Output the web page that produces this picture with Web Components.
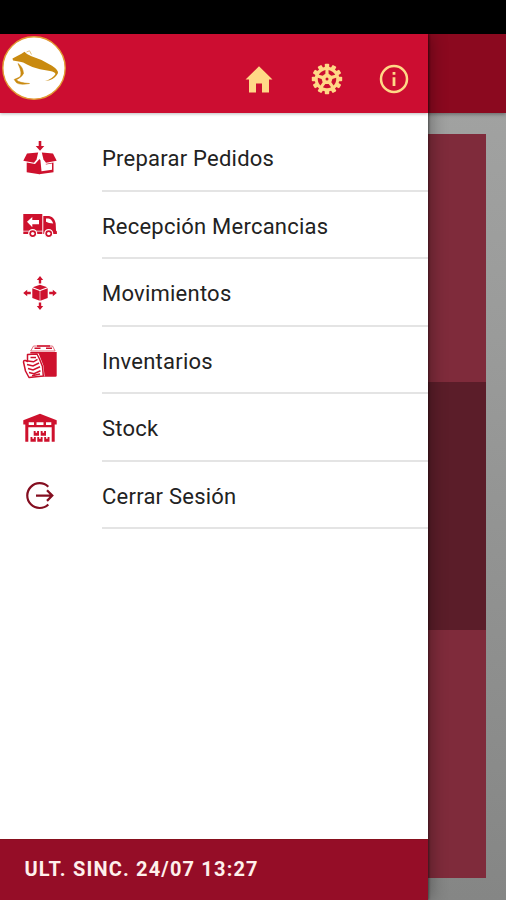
<!DOCTYPE html>
<html lang="es">
<head>
<meta charset="utf-8">
<title>Menú</title>
<style>
html,body{margin:0;height:100%;background:#000;overflow:hidden}
body{font-family:Roboto,"Liberation Sans",sans-serif}
</style>
</head>
<body>
<app-shell>
  <dashboard-page slot="page"></dashboard-page>
  <nav-drawer slot="drawer">
    <drawer-header slot="header"></drawer-header>
    <menu-item icon="box">Preparar Pedidos</menu-item>
    <menu-item icon="truck">Recepción Mercancias</menu-item>
    <menu-item icon="move">Movimientos</menu-item>
    <menu-item icon="inventory">Inventarios</menu-item>
    <menu-item icon="stock">Stock</menu-item>
    <menu-item icon="logout">Cerrar Sesión</menu-item>
    <sync-footer slot="footer">ULT. SINC. 24/07 13:27</sync-footer>
  </nav-drawer>
</app-shell>
<script>
const define = (name, html) => customElements.define(name, class extends HTMLElement {
  constructor() {
    super();
    this.attachShadow({mode: 'open'}).innerHTML = html;
  }
});

const icons = {
  box: `<g fill="#ce112d"><path d="M18.700 3h2.600v5h3L20 12.700 15.700 8h3z"/>
    <path d="M7 15.500 18.200 14.500 16.500 21.500 14 24.700 3.300 22.700z"/><path d="M33 15.500 21.800 14.500 23.500 21.500 26 24.700 36.700 22.700z"/>
    <path d="M6.700 24.500 15 26 19.500 21v15.300L6.700 34.300z"/>
    <path d="M19 21.500 20 21.500 25.300 26 33.500 24.500v9.800L19 36.300z"/></g>
    <path d="M20 17.500 26 26.400 32 25.500v6.300L21.500 33.300z" fill="#fff"/>`,
  truck: `<path fill="#ce112d" d="M3.300 8h19v16.700h-19zM3.300 25.500h19V28h-19zM23.300 10h5.800c4 .8 6 4 6.600 7.500l.3 7 .9 1v2.500H23.300z"/>
    <path fill="#fff" d="M7 15.800 12.300 11v3H19v4.200h-6.700v3zM26 12.500h2.400c2.600.5 4 2.300 4.800 5L29 17l-3-1.200z"/>
    <g fill="#ce112d" stroke="#fff" stroke-width="1.200"><circle cx="12.700" cy="27.600" r="4"/><circle cx="28.700" cy="27.600" r="4"/></g>
    <g fill="#fff"><circle cx="12.700" cy="27.600" r="1.700"/><circle cx="28.700" cy="27.600" r="1.700"/></g>`,
  move: `<g fill="#ce112d"><path d="M20 3l3.200 4h-2v3.500h-2.400V7h-2z"/>
    <path d="M20 37l3.200-4h-2v-3.500h-2.400V33h-2z"/><path d="M3.200 20l4-3.200v2h3.600v2.400H7.200v2z"/><path d="M36.800 20l-4-3.200v2h-3.600v2.400h3.600v2z"/>
    <path d="M12.800 14.300 20 11.800l7.200 2.500L20 17z"/><path d="M12.300 15.300l7.400 2.600V27.800l-7.400-2.900z"/><path d="M27.700 15.300l-7.400 2.600V27.800l7.400-2.900z"/></g>`,
  inventory: `<path d="M10.300 11h26.400v23.500q0 1.200-1.200 1.200H10.300z" fill="#ce112d"/>
    <path d="M10.700 10 13.500 5h19l2.600 5z" fill="#fff" stroke="#e2707e" stroke-width="1"/>
    <path d="M14.500 7.300h6M26 7.300h6M17 5h13" stroke="#ce112d" stroke-width="1.500"/>
    <path d="M9 13.500H18L22.500 25 23.500 34.500 9 36.500 5.500 31 3.500 20.500z" fill="#fff" stroke="#fff" stroke-width="2"/>
    <path d="M7.500 18v-4.500l9.500-.5 2.500 5 3 7.500.8 9.500L9 36.500 5.500 30 3.500 21q.2-2 2-1.500l2 1z" fill="#fff" stroke="#ce112d" stroke-width="1.500" stroke-linejoin="round"/>
    <path d="M10.500 16.500h5.500M8 20l5.500.8 4-2.500M7 23.500l6 1.500 6-3M8 27.500l5 1.400 7-3.200M9 31.500l5 1.200 6.500-3M12 34.800l8-1.800" fill="none" stroke="#ce112d" stroke-width="1.500"/>`,
  stock: `<g fill="#ce112d"><path d="M20 5.800 36.700 12.300v4.200h-2v17.300h-3V19.300H8.300v14.500h-3V16.500h-2v-4.200z"/>
    <path d="M13.700 23h5.300v4.700h-5.300zM20.700 23H26v4.700h-5.300zM10.500 29h5.300v4.700h-5.300zM17.300 29h5.300v4.700h-5.300zM24.200 29h5.300v4.700h-5.300z"/></g>
    <path d="M8.700 14.300h5.300v2.800H8.700zM16.500 14.300h7v2.800h-7zM26 14.300h5.300v2.800H26zM15.600 23h1.500v1.800h-1.500zM22.600 23h1.500v1.800h-1.500zM12.400 29h1.500v1.800h-1.500zM19.200 29h1.500v1.800h-1.500zM26.100 29h1.500v1.800h-1.500z" fill="#fff"/>`,
  logout: `<path d="M28.300 10.700A12.400 12.400 0 1 0 28.300 28.500M16 19.600H32M27 14.300 32.300 19.600 27 24.900" fill="none" stroke="#840e20" stroke-width="2.200"/>`
};

define('app-shell', `<style>
:host{display:block;position:relative;width:506px;height:900px;overflow:hidden;background:#000}
.page,.drawer{position:absolute;top:34px;bottom:0;left:0}
.page{right:0}.drawer{width:428px}
</style><div class="page"><slot name="page"></slot></div><div class="drawer"><slot name="drawer"></slot></div>`);

define('dashboard-page', `<style>
:host{display:flex;flex-direction:column;height:100%;background:linear-gradient(#a3a4a3,#9a9b9a 35%,#858685)}
header{flex:0 0 78.500px;background:#8b091f;box-shadow:0 1px 4px #0006}
main{flex:1;padding:21.500px 20.500px;display:grid;grid-template-rows:248px 248px 248px;align-content:start}
.a{background:#7f2b3b}.b{background:#5b1d29}
</style><header></header><main><div class="a"></div><div class="b"></div><div class="a"></div></main>`);

define('nav-drawer', `<style>
:host{display:flex;flex-direction:column;height:100%;background:#fff;box-shadow:1px 0 2px #0006,3px 0 16px #0005}
nav{flex:1;padding-top:11.700px}
</style><slot name="header"></slot><nav><slot></slot></nav><slot name="footer"></slot>`);

const teeth = Array.from({length: 12}, (_, i) => `<rect x="14.800" y="1.800" width="4.400" height="5" rx=".8" transform="rotate(${i * 30} 17 17)"/>`).join('');
const holes = Array.from({length: 5}, (_, i) => `<path d="M12.900 8.700Q17 6.800 21.100 8.700L18.700 11.900H15.300z" transform="rotate(${i * 72 + 36} 17 17)"/>`).join('');
define('drawer-header', `<style>
:host{display:flex;box-sizing:border-box;flex:0 0 78.500px;background:#cc0d31;padding:0 17px 0 2px;justify-content:space-between;box-shadow:0 1px 3px #0004}
.logo{width:64px;height:64px;margin-top:2px}
.actions{display:flex;gap:33.500px;margin-top:28px}
.actions svg{width:34px;height:34px;display:block}
</style>
<svg class="logo" viewBox="0 0 64 64"><circle cx="32" cy="32" r="31.200" fill="#fff" stroke="#e29a32" stroke-width="1.400"/>
<path d="M10.500 22.500 19.500 17.800 22.500 15.800 25 18 29.500 20.200 39.500 24 50 29.700Q56.500 34 56 37 54 42 47.500 44.200L43 45Q51 42.500 53.500 38 53 35.800 48 35L38 33.300Q30 31.500 25 28.500 21 26 18 25.800L11 24.500z" fill="#c98a10"/>
<path d="M24.500 16 27.500 14.800 29.500 18.500" fill="none" stroke="#e2c17a" stroke-width="1"/>
<path d="M16 27.500Q21 31 21.500 37.500 19.500 41.500 14.300 43.800 17 47 27.500 47.500 18 49.200 14.500 46.700L12.200 43.500 17.800 41Q21 38 16 27.500z" fill="#c98a10" stroke="#c98a10" stroke-width=".6"/></svg>
<div class="actions">
<svg viewBox="0 0 34 34"><path fill="#ffd886" d="M17 4.300 30.500 17.500H27v13h-7v-9h-6v9H7v-13H3.500z"/></svg>
<svg viewBox="0 0 34 34"><g fill="#ffd886"><circle cx="17" cy="17" r="12.300"/>${teeth}</g><g fill="#cc0d31">${holes}<circle cx="17" cy="17" r="1.500"/></g></svg>
<svg viewBox="0 0 34 34"><circle cx="17" cy="17" r="13" fill="none" stroke="#ffd886" stroke-width="2.500"/><path fill="#ffd886" d="M15.600 10h2.800v2.800h-2.800zM15.600 15.300h2.800V24h-2.800z"/></svg>
</div>`);

customElements.define('menu-item', class extends HTMLElement {
  constructor() {
    super();
    this.attachShadow({mode: 'open'}).innerHTML = `<style>
:host{display:flex;box-sizing:border-box;height:67.500px;padding-left:20px;gap:42px;color:#222;font-size:22px;letter-spacing:.23px}
svg{width:40px;height:40px;margin-top:14px;flex:none}
.label{flex:1;border-bottom:2px solid #e4e4e4;line-height:69px;white-space:nowrap}
</style><svg viewBox="0 0 40 40">${icons[this.getAttribute('icon')]}</svg><div class="label"><slot></slot></div>`;
  }
});

define('sync-footer', `<style>
:host{display:flex;box-sizing:border-box;flex:0 0 61px;align-items:center;padding:0 0 2px 24.500px;background:#950d27;border-top:1px solid #87101e;color:#fff0ec;font-size:20px;font-weight:700;letter-spacing:1.170px}
</style><slot></slot>`);
</script>
</body>
</html>
